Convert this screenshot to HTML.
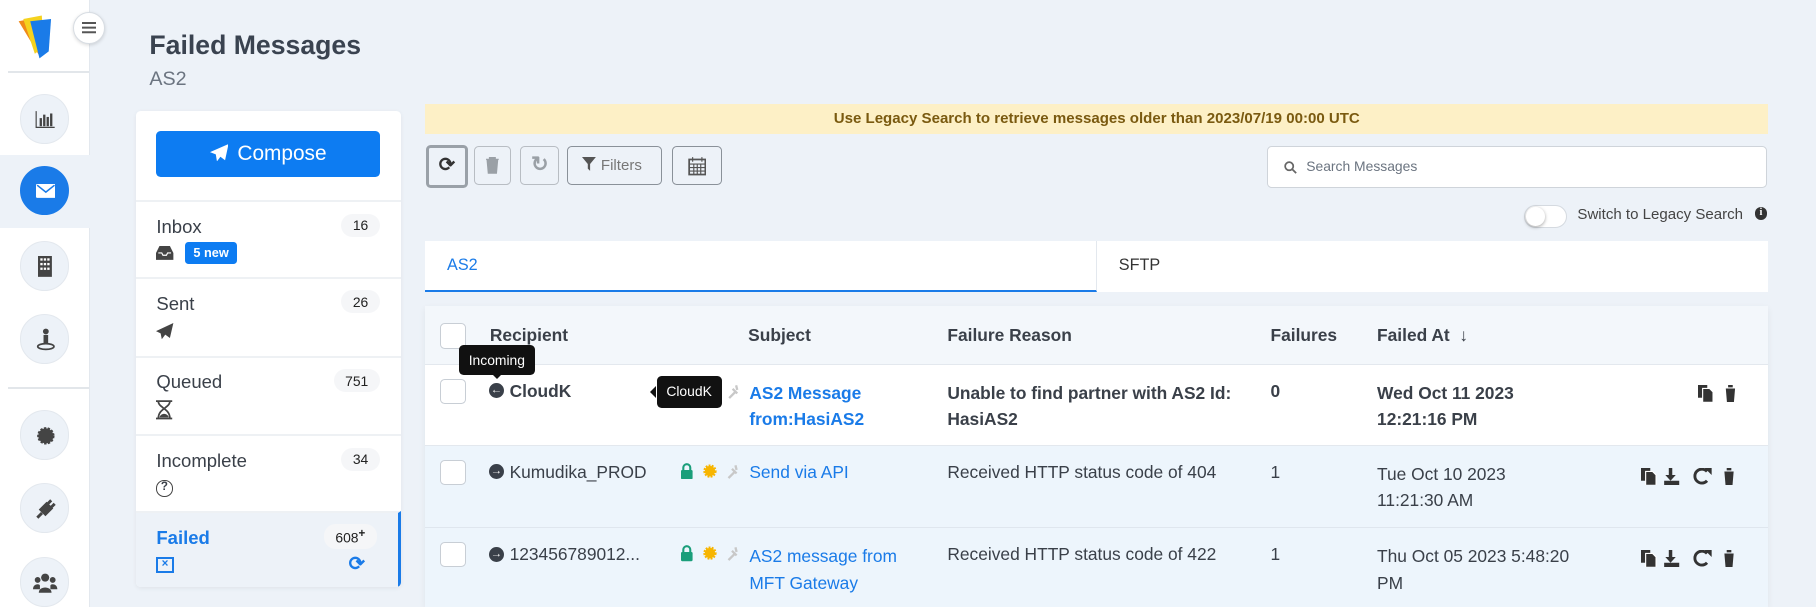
<!DOCTYPE html>
<html><head><meta charset="utf-8"><style>
*{box-sizing:border-box;margin:0;padding:0}
html,body{width:1816px;height:607px;overflow:hidden;background:#edf2f8}
body{font-family:"Liberation Sans",sans-serif;color:#3a4049}
#w{position:relative;width:1568px;height:524px;zoom:1.15816}
.abs{position:absolute}
.side{left:0;top:0;width:78px;height:524px;background:#fff;border-right:1px solid #e3e8ee}
.sb{left:17px;width:43px;height:43px;border-radius:50%;background:#edf2f8;border:1px solid #e3e8ee}
.hr{left:7px;width:70px;height:2px;background:#e2e6ea}
.card{left:117px;top:96px;width:229px;height:411px;background:#fff;border-radius:4px;box-shadow:0 1px 4px rgba(0,0,0,.06);overflow:hidden}
.item{position:absolute;left:0;width:229px;border-top:2px solid #eef1f4}
.item .l{position:absolute;left:18px;top:12px;font-size:16px;color:#3a4049}
.item .c{position:absolute;right:18px;top:10px;background:#f5f6f8;border-radius:10px;font-size:12px;padding:3px 10px;color:#222}
.btn{top:126px;height:34px;border:1px solid #8a9199;border-radius:4px;background:transparent}
.th{top:281px;font-size:15px;font-weight:bold;color:#3a4049}
.cb{left:380px;width:22px;height:22px;border:1px solid #c8ced5;border-radius:4px;background:#fff}
.t{font-size:15px}
a{color:#1a7be8;text-decoration:none}
</style></head><body><div id="w">
<div class="abs side">
 <svg class="abs" style="left:12px;top:10px" width="40" height="42" viewBox="0 0 40 42"><path d="M4 8 L14 6 L22 38 Z" fill="#f08a1a"/><path d="M8 6 L24 3 L26 30 L18 36 Z" fill="#f5d21e"/><path d="M14 8 L32 6 L30 34 L22 40 Z" fill="#1a7be8"/></svg>
 <div class="abs hr" style="top:61px"></div>
 <div class="abs sb" style="top:81px"><svg class="abs" style="left:12px;top:13px" width="18" height="16"><path d="M1 1v14h16" stroke="#444" fill="none"/><rect x="4" y="7" width="2" height="7" fill="#444"/><rect x="7" y="4" width="2" height="10" fill="#444"/><rect x="10" y="6" width="2" height="8" fill="#444"/><rect x="13" y="3" width="2" height="11" fill="#444"/></svg></div>
 <div class="abs" style="left:0;top:134px;width:78px;height:63px;background:#edf2f8"></div>
 <div class="abs sb" style="top:143px;background:#1a7be8;border-color:#1a7be8"><svg class="abs" style="left:13px;top:15px" width="17" height="12"><rect width="17" height="12" rx="1" fill="#fff"/><path d="M1 1l7.5 6L16 1" stroke="#1a7be8" fill="none" stroke-width="1.3"/></svg></div>
 <div class="abs sb" style="top:208px"><svg class="abs" style="left:15px;top:12px" width="12" height="18"><rect width="12" height="18" fill="#444"/><g fill="#fff"><rect x="2" y="2" width="2" height="2"/><rect x="5" y="2" width="2" height="2"/><rect x="8" y="2" width="2" height="2"/><rect x="2" y="6" width="2" height="2"/><rect x="5" y="6" width="2" height="2"/><rect x="8" y="6" width="2" height="2"/><rect x="2" y="10" width="2" height="2"/><rect x="5" y="10" width="2" height="2"/><rect x="8" y="10" width="2" height="2"/></g></svg></div>
 <div class="abs sb" style="top:271px"><svg class="abs" style="left:13px;top:11px" width="17" height="20"><circle cx="8.5" cy="3" r="2.5" fill="#444"/><rect x="6.5" y="6" width="4" height="8" fill="#444"/><ellipse cx="8.5" cy="16" rx="7" ry="2.5" stroke="#444" fill="none" stroke-width="1.5"/></svg></div>
 <div class="abs hr" style="top:334px"></div>
 <div class="abs sb" style="top:354px"><svg class="abs" style="left:13px;top:13px" width="17" height="17"><circle cx="8.5" cy="8.5" r="6.5" fill="#444" stroke="#444" stroke-width="2" stroke-dasharray="2 1.2"/></svg></div>
 <div class="abs sb" style="top:417px"><svg class="abs" style="left:12px;top:12px" width="19" height="19"><path d="M2 17l4-4M5 10l4 4 5-5-4-4zM11 5l3-3M14 8l3-3" stroke="#444" stroke-width="2.5" fill="#444"/></svg></div>
 <div class="abs sb" style="top:481px"><svg class="abs" style="left:11px;top:13px" width="21" height="17"><g fill="#444"><circle cx="10.5" cy="4" r="3.5"/><circle cx="4" cy="6" r="2.5"/><circle cx="17" cy="6" r="2.5"/><path d="M5 17c0-6 11-6 11 0z"/><path d="M0 14c0-5 6-5 6-3v3z"/><path d="M21 14c0-5-6-5-6-3v3z"/></g></svg></div>
</div>
<div class="abs" style="left:63px;top:10px;width:28px;height:28px;border-radius:50%;background:#fff;border:1px solid #d8dde3;box-shadow:0 1px 3px rgba(0,0,0,.15);z-index:3"><div style="position:absolute;left:7px;top:8px;width:12px;height:2px;background:#555;box-shadow:0 4px 0 #555,0 8px 0 #555"></div></div>

<div class="abs" style="left:129px;top:26px;font-size:23px;font-weight:bold;color:#3a4350">Failed Messages</div>
<div class="abs" style="left:129px;top:59px;font-size:17px;color:#6b7480">AS2</div>

<div class="abs card">
 <div class="abs" style="left:18px;top:17px;width:193px;height:40px;background:#0d7cf2;border-radius:4px;color:#fff;font-size:18px;text-align:center;line-height:40px"><svg width="16" height="15" style="vertical-align:-1px;margin-right:8px"><path d="M16 0L0 7l5 2 1 6 3-4 4 3z" fill="#fff"/></svg>Compose</div>
 <div class="item" style="top:77px;height:66px"><div class="l">Inbox</div><div class="c">16</div>
  <svg class="abs" style="left:18px;top:38px" width="15" height="12"><path d="M0 6l3-6h9l3 6v6H0z" fill="#444"/><path d="M2 6h3l1 2h3l1-2h3" stroke="#fff" fill="none"/></svg>
  <div class="abs" style="left:43px;top:34px;background:#0d7cf2;color:#fff;font-size:11px;font-weight:bold;padding:3px 7px;border-radius:3px">5 new</div></div>
 <div class="item" style="top:143px;height:68px"><div class="l">Sent</div><div class="c">26</div>
  <svg class="abs" style="left:18px;top:38px" width="15" height="14"><path d="M15 0L0 7l4 2 1 5 3-4 4 3z" fill="#444"/></svg></div>
 <div class="item" style="top:211px;height:68px"><div class="l">Queued</div><div class="c">751</div>
  <svg class="abs" style="left:18px;top:37px" width="14" height="17"><path d="M0 1h14M0 16h14M2 1c0 6 10 6 10 15M12 1c0 6-10 6-10 15" stroke="#444" stroke-width="1.5" fill="none"/><path d="M3 15c1-4 7-4 8 0z" fill="#444"/></svg></div>
 <div class="item" style="top:279px;height:66px"><div class="l">Incomplete</div><div class="c">34</div>
  <div class="abs" style="left:18px;top:38px;width:14px;height:14px;border:1.5px solid #444;border-radius:50%;font-size:10px;font-weight:bold;text-align:center;line-height:11px">?</div></div>
 <div class="item" style="top:345px;height:66px;background:#edf2f8;border-right:3px solid #1a7be8"><div class="l" style="color:#1a7be8;font-weight:bold">Failed</div><div class="c" style="background:#f5f6f8">608<sup style="font-size:10px;font-weight:bold">+</sup></div>
  <div class="abs" style="left:18px;top:38px;width:15px;height:14px;border:2px solid #1a7be8;color:#1a7be8;font-size:10px;font-weight:bold;text-align:center;line-height:10px">×</div>
  <div class="abs" style="left:184px;top:34px;color:#1a7be8;font-size:17px;font-weight:bold">⟳</div></div>
</div>

<div class="abs" style="left:367px;top:90px;width:1160px;height:26px;background:#fdf0c6;color:#7a5a10;font-size:13px;font-weight:bold;text-align:center;line-height:26px">Use Legacy Search to retrieve messages older than 2023/07/19 00:00 UTC</div>
<div class="abs btn" style="left:368px;width:36px;border:3px solid #9aa1a8;top:125px;height:37px;color:#333;font-size:17px;font-weight:bold;text-align:center;line-height:30px">⟳</div>
<div class="abs btn" style="left:409px;width:32px;border-color:#b8bdc3"><svg class="abs" style="left:10px;top:9px" width="11" height="14"><path d="M0 2h11M3 2V0h5v2M1 3h9l-1 11H2z" fill="#9aa0a6" stroke="#9aa0a6"/></svg></div>
<div class="abs btn" style="left:449px;width:34px;border-color:#b8bdc3;color:#9aa0a6;font-size:18px;text-align:center;line-height:31px;font-weight:bold">↻</div>
<div class="abs btn" style="left:490px;width:82px;color:#777;font-size:13px;line-height:32px;padding-left:12px"><svg width="12" height="12" style="vertical-align:-1px;margin-right:4px"><path d="M0 0h12L7 6v6L5 10V6z" fill="#555"/></svg>Filters</div>
<div class="abs btn" style="left:580px;width:43px"><svg class="abs" style="left:13px;top:8px" width="16" height="17"><rect x="1" y="3" width="14" height="13" fill="none" stroke="#555" stroke-width="1.5"/><path d="M1 7h14M1 10h14M1 13h14M5 7v9M8 7v9M11 7v9M4 1v4M12 1v4" stroke="#555"/></svg></div>
<div class="abs" style="left:1094px;top:126px;width:432px;height:36px;background:#fff;border:1px solid #cfd4da;border-radius:4px;font-size:12px;color:#6b7480;line-height:34px;padding-left:33px">Search Messages
 <svg class="abs" style="left:14px;top:12px" width="11" height="11"><circle cx="4.5" cy="4.5" r="3.5" stroke="#666" stroke-width="1.5" fill="none"/><path d="M7 7l3.5 3.5" stroke="#666" stroke-width="1.5"/></svg></div>
<div class="abs" style="left:1316px;top:177px;width:37px;height:20px;border:1px solid #d5dae0;border-radius:10px;background:#fff"><div style="position:absolute;left:1px;top:1px;width:16px;height:16px;border-radius:50%;background:#fff;box-shadow:0 1px 3px rgba(0,0,0,.35)"></div></div>
<div class="abs" style="left:1362px;top:178px;font-size:13px;color:#444">Switch to Legacy Search</div>
<div class="abs" style="left:1515px;top:179px;width:11px;height:11px;border-radius:50%;background:#333;color:#fff;font-size:9px;font-weight:bold;text-align:center;line-height:11px;font-family:'Liberation Serif',serif">i</div>

<div class="abs" style="left:367px;top:208px;width:1160px;height:44px;background:#fff"></div>
<div class="abs" style="left:367px;top:208px;width:580px;height:44px;border-bottom:2px solid #1a7be8;border-right:1px solid #e3e8ee;color:#1a7be8;font-size:14px;padding:13px 0 0 19px">AS2</div>
<div class="abs" style="left:966px;top:221px;font-size:14px;color:#333">SFTP</div>

<div class="abs" style="left:367px;top:264px;width:1160px;height:260px;background:#f3f7fb;box-shadow:0 2px 6px rgba(0,0,0,.06)"></div>
<div class="abs" style="left:367px;top:314px;width:1160px;height:70px;background:#fff;border-top:1px solid #e3e8ee"></div>
<div class="abs" style="left:367px;top:384px;width:1160px;height:72px;background:#edf5fc;border-top:1px solid #e3e8ee"></div>
<div class="abs" style="left:367px;top:455px;width:1160px;height:69px;background:#edf5fc;border-top:1px solid #dfe6ee"></div>

<div class="abs cb" style="top:279px"></div>
<div class="abs th" style="left:423px">Recipient</div>
<div class="abs th" style="left:646px">Subject</div>
<div class="abs th" style="left:818px">Failure Reason</div>
<div class="abs th" style="left:1097px">Failures</div>
<div class="abs th" style="left:1189px">Failed At &nbsp;↓</div>

<div class="abs cb" style="top:327px"></div>
<div class="abs" style="left:422px;top:331px;width:13px;height:13px;border-radius:50%;background:#3a4049;color:#fff;font-size:10px;text-align:center;line-height:13px;font-weight:bold">←</div>
<div class="abs t" style="left:440px;top:329px;font-weight:bold">CloudK</div>
<div class="abs" style="left:396px;top:298px;width:66px;height:26px;background:#111;color:#fff;font-size:12px;border-radius:4px;text-align:center;line-height:26px">Incoming</div>
<div class="abs" style="left:425px;top:323px;border:5px solid transparent;border-top-color:#111;border-bottom:0"></div>
<div class="abs" style="left:567px;top:325px;width:56px;height:27px;background:#111;color:#fff;font-size:12px;border-radius:4px;text-align:center;line-height:27px">CloudK</div>
<div class="abs" style="left:561px;top:333px;border:6px solid transparent;border-right-color:#111;border-left:0"></div>
<div class="abs t" style="left:647px;top:329px;font-weight:bold;line-height:22px"><a>AS2 Message<br>from:HasiAS2</a></div>
<div class="abs t" style="left:818px;top:329px;font-weight:bold;line-height:22px">Unable to find partner with AS2 Id:<br>HasiAS2</div>
<div class="abs t" style="left:1097px;top:329px;font-weight:bold">0</div>
<div class="abs t" style="left:1189px;top:329px;font-weight:bold;line-height:22px">Wed Oct 11 2023<br>12:21:16 PM</div>

<div class="abs cb" style="top:397px"></div>
<div class="abs" style="left:422px;top:401px;width:13px;height:13px;border-radius:50%;background:#3a4049;color:#fff;font-size:10px;text-align:center;line-height:13px;font-weight:bold">→</div>
<div class="abs t" style="left:440px;top:399px">Kumudika_PROD</div>
<div class="abs t" style="left:647px;top:399px"><a>Send via API</a></div>
<div class="abs t" style="left:818px;top:399px">Received HTTP status code of 404</div>
<div class="abs t" style="left:1097px;top:399px">1</div>
<div class="abs t" style="left:1189px;top:399px;line-height:22px">Tue Oct 10 2023<br>11:21:30 AM</div>

<div class="abs cb" style="top:468px"></div>
<div class="abs" style="left:422px;top:472px;width:13px;height:13px;border-radius:50%;background:#3a4049;color:#fff;font-size:10px;text-align:center;line-height:13px;font-weight:bold">→</div>
<div class="abs t" style="left:440px;top:470px">123456789012...</div>
<div class="abs t" style="left:647px;top:469px;line-height:23px"><a>AS2 message from<br>MFT Gateway</a></div>
<div class="abs t" style="left:818px;top:470px">Received HTTP status code of 422</div>
<div class="abs t" style="left:1097px;top:470px">1</div>
<div class="abs t" style="left:1189px;top:469px;line-height:23px">Thu Oct 05 2023 5:48:20<br>PM</div>

<svg class="abs" style="left:588px;top:400px" width="60" height="14"><rect x="0" y="6" width="10" height="8" rx="1" fill="#1a9e7a"/><path d="M2 7V4a3 3 0 016 0v3" stroke="#1a9e7a" stroke-width="1.8" fill="none"/><circle cx="25" cy="7" r="4.5" fill="#f7b500" stroke="#f7b500" stroke-width="2.5" stroke-dasharray="1.5 1"/><path d="M41 13l5-5M44 5l4 4M47 2l1 4" stroke="#c8c8c8" stroke-width="2"/></svg>
<svg class="abs" style="left:588px;top:471px" width="60" height="14"><rect x="0" y="6" width="10" height="8" rx="1" fill="#1a9e7a"/><path d="M2 7V4a3 3 0 016 0v3" stroke="#1a9e7a" stroke-width="1.8" fill="none"/><circle cx="25" cy="7" r="4.5" fill="#f7b500" stroke="#f7b500" stroke-width="2.5" stroke-dasharray="1.5 1"/><path d="M41 13l5-5M44 5l4 4M47 2l1 4" stroke="#c8c8c8" stroke-width="2"/></svg>
<svg class="abs" style="left:629px;top:331px" width="14" height="14"><path d="M1 13l5-5M4 5l4 4M7 2l1 4" stroke="#c8c8c8" stroke-width="2"/></svg>

<svg class="abs" style="left:1466px;top:332px" width="34" height="15"><g fill="#333"><rect x="0" y="0" width="8" height="11"/><path d="M4 3h6l3 3v9H4z" stroke="#fff"/><path d="M23 2h10M26 2V0h4v2M24 3h8l-1 12h-6z"/></g></svg>
<svg class="abs" style="left:1417px;top:404px" width="84" height="15"><g fill="#333"><rect x="0" y="0" width="8" height="11"/><path d="M4 3h6l3 3v9H4z" stroke="#fff"/><path d="M24 0h3v6h3l-4.5 5L21 6h3zM20 11h13v4H20z"/><path d="M57 3a6 6 0 100 8" stroke="#333" stroke-width="2.5" fill="none"/><path d="M55 0h6v6z"/><path d="M71 2h10M74 2V0h4v2M72 3h8l-1 12h-6z"/></g></svg>
<svg class="abs" style="left:1417px;top:475px" width="84" height="15"><g fill="#333"><rect x="0" y="0" width="8" height="11"/><path d="M4 3h6l3 3v9H4z" stroke="#fff"/><path d="M24 0h3v6h3l-4.5 5L21 6h3zM20 11h13v4H20z"/><path d="M57 3a6 6 0 100 8" stroke="#333" stroke-width="2.5" fill="none"/><path d="M55 0h6v6z"/><path d="M71 2h10M74 2V0h4v2M72 3h8l-1 12h-6z"/></g></svg>
</div></body></html>
